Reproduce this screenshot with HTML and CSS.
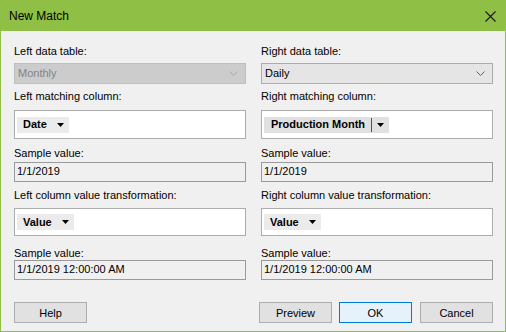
FILE: index.html
```html
<!DOCTYPE html>
<html>
<head>
<meta charset="utf-8">
<link rel="stylesheet" href="styles.css">
</head>
<body>
<div class="window">
  <div class="titlebar">
    <span class="title">New Match</span>
    <svg class="close" width="11" height="11" viewBox="0 0 11 11"><path d="M0.5 0.5 L10.5 10.5 M10.5 0.5 L0.5 10.5" stroke="#1a1a1a" stroke-width="1.1" fill="none"/></svg>
  </div>
  <div class="content">
    <div class="columns">
      <div class="col">
        <div class="lbl first">Left data table:</div>
        <div class="select disabled"><span>Monthly</span><svg class="chev" width="9" height="5" viewBox="0 0 9 5"><path d="M0.5 0.5 L4.5 4.5 L8.5 0.5" stroke="#a6a6a6" fill="none"/></svg></div>
        <div class="lbl after-select">Left matching column:</div>
        <div class="chipbox"><span class="chip">Date<svg class="tri" width="7" height="4" viewBox="0 0 7 4"><path d="M0 0 H7 L3.5 4 Z" fill="#000"/></svg></span></div>
        <div class="lbl after-box">Sample value:</div>
        <div class="sample">1/1/2019</div>
        <div class="lbl after-sample">Left column value transformation:</div>
        <div class="chipbox second"><span class="chip">Value<svg class="tri" width="7" height="4" viewBox="0 0 7 4"><path d="M0 0 H7 L3.5 4 Z" fill="#000"/></svg></span></div>
        <div class="lbl after-box2">Sample value:</div>
        <div class="sample tight">1/1/2019 12:00:00 AM</div>
      </div>
      <div class="col">
        <div class="lbl first">Right data table:</div>
        <div class="select"><span>Daily</span><svg class="chev" width="9" height="5" viewBox="0 0 9 5"><path d="M0.5 0.5 L4.5 4.5 L8.5 0.5" stroke="#606060" fill="none"/></svg></div>
        <div class="lbl after-select">Right matching column:</div>
        <div class="chipbox"><span class="chip active">Production Month<span class="sep"></span><svg class="tri" width="7" height="4" viewBox="0 0 7 4"><path d="M0 0 H7 L3.5 4 Z" fill="#000"/></svg></span></div>
        <div class="lbl after-box">Sample value:</div>
        <div class="sample">1/1/2019</div>
        <div class="lbl after-sample">Right column value transformation:</div>
        <div class="chipbox second"><span class="chip">Value<svg class="tri" width="7" height="4" viewBox="0 0 7 4"><path d="M0 0 H7 L3.5 4 Z" fill="#000"/></svg></span></div>
        <div class="lbl after-box2">Sample value:</div>
        <div class="sample tight">1/1/2019 12:00:00 AM</div>
      </div>
    </div>
    <div class="buttons">
      <button class="btn">Help</button>
      <div class="spacer"></div>
      <button class="btn">Preview</button>
      <button class="btn primary">OK</button>
      <button class="btn last">Cancel</button>
    </div>
  </div>
</div>
</body>
</html>
```
FILE: styles.css
```css
* { box-sizing: border-box; }
html, body { margin: 0; padding: 0; }
body {
  width: 506px;
  height: 332px;
  overflow: hidden;
  font-family: "Liberation Sans", Arial, sans-serif;
  font-size: 11px;
  color: #000;
}
.window {
  width: 506px;
  height: 332px;
  background: #f0f0f0;
  border: 1px solid #8fbf45;
  border-top: none;
  display: flex;
  flex-direction: column;
}
.titlebar {
  height: 31px;
  margin: 0 -1px;
  background: #8fbf45;
  display: flex;
  align-items: center;
  justify-content: space-between;
  padding: 0 10px 0 9px;
}
.title {
  font-size: 12px;
  color: #000;
  line-height: 14px;
  margin-top: 1px;
}
.close { margin-top: 1px; }
.content {
  flex: 1;
  padding: 14px 12px 0 13px;
  display: flex;
  flex-direction: column;
}
.columns {
  display: grid;
  grid-template-columns: 232px 232px;
  column-gap: 15px;
}
.col {
  display: flex;
  flex-direction: column;
}
.lbl {
  line-height: 13px;
  height: 13px;
  white-space: nowrap;
}
.after-select { margin-top: 6px; }
.after-box { margin-top: 8px; }
.after-sample { margin-top: 7px; }
.after-box2 { margin-top: 11px; }
.select {
  margin-top: 5px;
  height: 21px;
  background: #e5e5e5;
  border: 1px solid #acacac;
  display: flex;
  align-items: center;
  justify-content: space-between;
  padding: 0 7px 0 3px;
  line-height: 13px;
}
.select.disabled {
  background: #cccccc;
  border-color: #bfbfbf;
  color: #838383;
}
.chipbox {
  margin-top: 7px;
  height: 29px;
  background: #fff;
  border: 1px solid #acacac;
  display: flex;
  align-items: center;
  padding: 0 2px;
}
.chipbox.second {
  margin-top: 6px;
  height: 28px;
}
.chip {
  display: inline-flex;
  align-items: center;
  height: 16px;
  background: #ebebeb;
  font-weight: bold;
  padding: 0 5px 0 6px;
  line-height: 13px;
}
.chip .tri { margin-left: 10px; }
.chip.active { background: #e1e1e1; padding-left: 7px; }
.chip.active .tri { margin-left: 5px; }
.sep {
  width: 1px;
  height: 14px;
  background: #505050;
  margin-left: 6px;
}
.sample {
  margin-top: 2px;
  height: 20px;
  border: 1px solid #9a9a9a;
  background: #f0f0f0;
  padding: 0 2px;
  line-height: 17px;
  white-space: nowrap;
}
.sample.tight { margin-top: 0; }
.buttons {
  margin-top: auto;
  margin-bottom: 8px;
  display: flex;
  gap: 7px;
}
.spacer { flex: 1; }
.btn {
  width: 73px;
  height: 21px;
  background: #e1e1e1;
  border: 1px solid #adadad;
  font-family: "Liberation Sans", Arial, sans-serif;
  font-size: 11px;
  color: #000;
  padding: 0;
  margin: 0;
}
.btn.last { margin-left: 1px; }
.btn.primary {
  background: #e5f1fb;
  border-color: #0078d7;
}
```
